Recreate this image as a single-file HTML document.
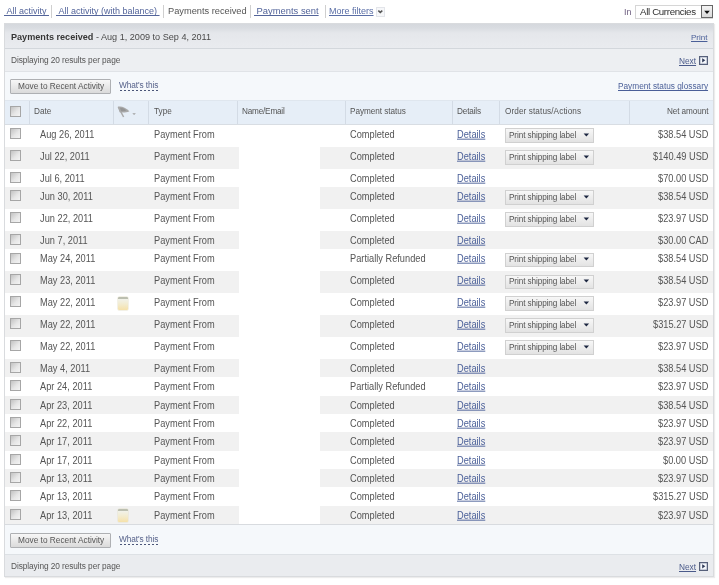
<!DOCTYPE html>
<html><head><meta charset="utf-8"><style>
html,body{margin:0;padding:0;background:#fff;width:719px;height:585px;overflow:hidden;position:relative}
body{font-family:"Liberation Sans",sans-serif}
.t{position:absolute;white-space:nowrap;will-change:transform;text-decoration-skip-ink:none}
.r{position:absolute}
b{font-weight:bold}
</style></head><body>
<div class="t " style="left:4.40px;top:7.18px;font-size:9px;line-height:9px;color:#53649a;font-weight:normal;text-decoration:underline;">&nbsp;All activity&nbsp;</div>
<div class="r" style="left:51.00px;top:4.50px;width:1.00px;height:13.00px;background:#cfcfcf"></div>
<div class="t " style="left:56.30px;top:7.18px;font-size:9px;line-height:9px;color:#53649a;font-weight:normal;text-decoration:underline;">&nbsp;All activity (with balance)&nbsp;</div>
<div class="r" style="left:163.00px;top:4.50px;width:1.00px;height:13.00px;background:#cfcfcf"></div>
<div class="t " style="left:167.70px;top:6.97px;font-size:9.25px;line-height:9.25px;color:#555555;font-weight:normal;">Payments received</div>
<div class="r" style="left:250.00px;top:4.50px;width:1.00px;height:13.00px;background:#cfcfcf"></div>
<div class="t " style="left:253.80px;top:6.34px;font-size:9.4px;line-height:9.4px;color:#53649a;font-weight:normal;text-decoration:underline;">&nbsp;Payments sent</div>
<div class="r" style="left:324.50px;top:4.50px;width:1.00px;height:13.00px;background:#cfcfcf"></div>
<div class="t " style="left:328.80px;top:7.18px;font-size:9px;line-height:9px;color:#5a6ea6;font-weight:normal;text-decoration:underline;">More filters</div>
<div class="r" style="left:376px;top:7px;width:7px;height:7.5px;background:#f6f7f9;border:1px solid #e3e5ea"></div>
<svg class="r" style="left:375.5px;top:7.5px" width="8" height="8" viewBox="0 0 8 8"><path d="M2.3 2.6 L4.3 4.4 L6.3 2.6" stroke="#555" stroke-width="1.5" fill="none"/></svg>
<div class="t " style="left:624.00px;top:7.78px;font-size:9px;line-height:9px;color:#6e5f80;font-weight:normal;">In</div>
<div class="r" style="left:635px;top:4.5px;width:76px;height:12.5px;border:1px solid #d6d6d6;background:#fff"></div>
<div class="t " style="left:639.70px;top:6.69px;font-size:9.7px;line-height:9.7px;color:#2e2e2e;font-weight:normal;letter-spacing:-0.33px;">All Currencies</div>
<div class="r" style="left:700.5px;top:4.5px;width:10px;height:11.5px;border:1px solid #666;background:linear-gradient(#f4f4f4,#dadada)"></div>
<svg class="r" style="left:701.5px;top:5.5px" width="10" height="11" viewBox="0 0 10 11"><path d="M2.2 4.8 L7.8 4.8 L5 8 Z" fill="#111"/></svg>
<div class="r" style="left:4px;top:23px;width:708px;height:552px;border:1px solid #d9dbde;background:#fff;box-shadow:1px 1px 1px #ececec"></div>
<div class="r" style="left:5.00px;top:24.00px;width:708.00px;height:24.00px;background:linear-gradient(#d5d8dd 0px,#d9dce1 4px,#e5e7eb 9px,#e9ebef 24px)"></div>
<div class="r" style="left:5.00px;top:48.00px;width:708.00px;height:1.00px;background:#d3d7dc"></div>
<div class="t " style="left:10.80px;top:33.10px;font-size:9.1px;line-height:9.1px;color:#4a4a4a;font-weight:normal;"><b style="color:#363636">Payments received</b> - Aug 1, 2009 to Sep 4, 2011</div>
<div class="t " style="right:11.50px;top:33.73px;font-size:8px;line-height:8px;color:#4a5f98;font-weight:normal;text-decoration:underline;">Print</div>
<div class="r" style="left:5.00px;top:49.00px;width:708.00px;height:22.00px;background:#edeff2"></div>
<div class="r" style="left:5.00px;top:71.00px;width:708.00px;height:1.00px;background:#e0e3e7"></div>
<div class="t " style="left:10.80px;top:56.17px;font-size:8.3px;line-height:8.3px;color:#555555;font-weight:normal;letter-spacing:-0.08px;">Displaying 20 results per page</div>
<div class="t " style="right:23.30px;top:56.57px;font-size:8.3px;line-height:8.3px;color:#4a5a8a;font-weight:normal;text-decoration:underline;">Next</div><div class="r" style="left:699.3px;top:56.2px;width:7px;height:6.5px;border:1px solid #56607a;background:#f4f7fb;box-shadow:inset 0 0 0 0.5px #9aa2b6"></div><svg class="r" style="left:699.3px;top:56.2px" width="9" height="9" viewBox="0 0 9 9"><path d="M3.2 2.2 L6.3 4.3 L3.2 6.4 Z" fill="#2f3a58"/></svg>
<div class="r" style="left:5.00px;top:72.00px;width:708.00px;height:28.00px;background:#f5f8fb"></div>
<div class="r" style="left:10px;top:79.2px;width:99px;height:12.5px;border:1px solid #aeb0b3;background:linear-gradient(#f7f7f7,#e6e6e6 60%,#dadada);border-radius:1px"></div><div class="t " style="left:18.10px;top:82.17px;font-size:8.3px;line-height:8.3px;color:#555555;font-weight:normal;">Move to Recent Activity</div><div class="t " style="left:118.90px;top:80.77px;font-size:8.3px;line-height:8.3px;color:#56628a;font-weight:normal;letter-spacing:-0.1px;">What's this</div><div class="r" style="left:119.50px;top:89.80px;width:39.00px;height:1.00px;background:repeating-linear-gradient(90deg,#4a5578 0 2px,transparent 2px 4px)"></div>
<div class="t " style="right:11.00px;top:83.40px;font-size:8.27px;line-height:8.27px;color:#4a5f98;font-weight:normal;text-decoration:underline;">Payment status glossary</div>
<div class="r" style="left:5.00px;top:99.50px;width:708.00px;height:1.00px;background:#dfe6ee"></div>
<div class="r" style="left:5.00px;top:100.50px;width:708.00px;height:23.50px;background:#e6eef7"></div>
<div class="r" style="left:5.00px;top:124.00px;width:708.00px;height:1.00px;background:#d8dde3"></div>
<div class="r" style="left:29.00px;top:100.50px;width:1.00px;height:23.50px;background:#d3dbe5"></div>
<div class="r" style="left:113.00px;top:100.50px;width:1.00px;height:23.50px;background:#d3dbe5"></div>
<div class="r" style="left:148.00px;top:100.50px;width:1.00px;height:23.50px;background:#d3dbe5"></div>
<div class="r" style="left:237.00px;top:100.50px;width:1.00px;height:23.50px;background:#d3dbe5"></div>
<div class="r" style="left:345.00px;top:100.50px;width:1.00px;height:23.50px;background:#d3dbe5"></div>
<div class="r" style="left:452.00px;top:100.50px;width:1.00px;height:23.50px;background:#d3dbe5"></div>
<div class="r" style="left:499.00px;top:100.50px;width:1.00px;height:23.50px;background:#d3dbe5"></div>
<div class="r" style="left:629.00px;top:100.50px;width:1.00px;height:23.50px;background:#d3dbe5"></div>
<div class="r" style="left:10.00px;top:105.50px;width:11.00px;height:11.00px;border:1px solid #a6a6a6;background:linear-gradient(135deg,#c2c2c2,#e6e6e6 55%,#f4f4f4);box-sizing:border-box"></div>
<div class="t " style="left:34.00px;top:107.66px;font-size:8.2px;line-height:8.2px;color:#555555;font-weight:normal;">Date</div>
<svg class="r" style="left:116px;top:105px" width="22" height="14" viewBox="0 0 22 14"><path d="M2.3 2 L7.6 12" stroke="#aaaaaa" stroke-width="1.5"/><path d="M1.8 1.8 C5 0.8 9.5 2.2 13.4 6.2 C10 7.8 6.5 7.9 3.6 7.2 Z" fill="#a9a9a9"/><path d="M4 2.8 C6.5 2.6 9 4 10.5 5.6 C8.5 6.4 6 6.4 5 6 Z" fill="#959595"/><path d="M16.3 8.3 L19.9 8.3 L18.1 10 Z" fill="#a0a0a0"/></svg>
<div class="t " style="left:153.75px;top:107.66px;font-size:8.2px;line-height:8.2px;color:#555555;font-weight:normal;">Type</div>
<div class="t " style="left:241.90px;top:107.66px;font-size:8.2px;line-height:8.2px;color:#555555;font-weight:normal;letter-spacing:-0.2px;">Name/Email</div>
<div class="t " style="left:350.00px;top:107.66px;font-size:8.2px;line-height:8.2px;color:#555555;font-weight:normal;letter-spacing:-0.05px;">Payment status</div>
<div class="t " style="left:457.00px;top:107.66px;font-size:8.2px;line-height:8.2px;color:#555555;font-weight:normal;letter-spacing:-0.15px;">Details</div>
<div class="t " style="left:504.70px;top:107.66px;font-size:8.2px;line-height:8.2px;color:#555555;font-weight:normal;letter-spacing:0.1px;">Order status/Actions</div>
<div class="t " style="right:10.60px;top:107.66px;font-size:8.2px;line-height:8.2px;color:#555555;font-weight:normal;letter-spacing:-0.1px;">Net amount</div>
<div class="r" style="left:5.00px;top:125.00px;width:708.00px;height:21.90px;background:#ffffff"></div>
<div class="r" style="left:239.00px;top:125.00px;width:81.30px;height:21.90px;background:#fff"></div>
<div class="r" style="left:10.00px;top:128.20px;width:11.00px;height:11.00px;border:1px solid #a6a6a6;background:linear-gradient(135deg,#c2c2c2,#e6e6e6 55%,#f4f4f4);box-sizing:border-box"></div>
<div class="t " style="left:40.00px;top:130.17px;font-size:9.25px;line-height:9.25px;color:#555555;font-weight:normal;transform:scaleY(1.1);transform-origin:0 1.09px;">Aug 26, 2011</div>
<div class="t " style="left:154.00px;top:130.17px;font-size:9.25px;line-height:9.25px;color:#555555;font-weight:normal;transform:scaleY(1.1);transform-origin:0 1.09px;">Payment From</div>
<div class="t " style="left:350.00px;top:130.17px;font-size:9.25px;line-height:9.25px;color:#555555;font-weight:normal;transform:scaleY(1.1);transform-origin:0 1.09px;">Completed</div>
<div class="t " style="left:457.40px;top:130.17px;font-size:9.25px;line-height:9.25px;color:#4a5f98;font-weight:normal;text-decoration:underline;transform:scaleY(1.1);transform-origin:0 1.09px;">Details</div>
<div class="r" style="left:504.5px;top:128.30px;width:89px;height:14.8px;box-sizing:border-box;border:1px solid #d0d0d0;background:linear-gradient(#f7f7f7,#e3e3e3)"></div>
<div class="t " style="left:509.30px;top:132.06px;font-size:8.2px;line-height:8.2px;color:#555555;font-weight:normal;letter-spacing:-0.1px;">Print shipping label</div>
<svg class="r" style="left:582px;top:128.60px" width="8" height="14" viewBox="0 0 8 14"><path d="M1.6 4.6 L7.1 4.6 L4.35 7.4 Z" fill="#1c2640"/></svg>
<div class="t " style="right:10.60px;top:130.17px;font-size:9.25px;line-height:9.25px;color:#555555;font-weight:normal;transform:scaleY(1.1);transform-origin:0 1.09px;">$38.54 USD</div>
<div class="r" style="left:5.00px;top:146.90px;width:708.00px;height:21.90px;background:#f1f1f1"></div>
<div class="r" style="left:239.00px;top:146.90px;width:81.30px;height:21.90px;background:#fff"></div>
<div class="r" style="left:10.00px;top:150.10px;width:11.00px;height:11.00px;border:1px solid #a6a6a6;background:linear-gradient(135deg,#c2c2c2,#e6e6e6 55%,#f4f4f4);box-sizing:border-box"></div>
<div class="t " style="left:40.00px;top:152.07px;font-size:9.25px;line-height:9.25px;color:#555555;font-weight:normal;transform:scaleY(1.1);transform-origin:0 1.09px;">Jul 22, 2011</div>
<div class="t " style="left:154.00px;top:152.07px;font-size:9.25px;line-height:9.25px;color:#555555;font-weight:normal;transform:scaleY(1.1);transform-origin:0 1.09px;">Payment From</div>
<div class="t " style="left:350.00px;top:152.07px;font-size:9.25px;line-height:9.25px;color:#555555;font-weight:normal;transform:scaleY(1.1);transform-origin:0 1.09px;">Completed</div>
<div class="t " style="left:457.40px;top:152.07px;font-size:9.25px;line-height:9.25px;color:#4a5f98;font-weight:normal;text-decoration:underline;transform:scaleY(1.1);transform-origin:0 1.09px;">Details</div>
<div class="r" style="left:504.5px;top:150.20px;width:89px;height:14.8px;box-sizing:border-box;border:1px solid #d0d0d0;background:linear-gradient(#f7f7f7,#e3e3e3)"></div>
<div class="t " style="left:509.30px;top:153.96px;font-size:8.2px;line-height:8.2px;color:#555555;font-weight:normal;letter-spacing:-0.1px;">Print shipping label</div>
<svg class="r" style="left:582px;top:150.50px" width="8" height="14" viewBox="0 0 8 14"><path d="M1.6 4.6 L7.1 4.6 L4.35 7.4 Z" fill="#1c2640"/></svg>
<div class="t " style="right:10.60px;top:152.07px;font-size:9.25px;line-height:9.25px;color:#555555;font-weight:normal;transform:scaleY(1.1);transform-origin:0 1.09px;">$140.49 USD</div>
<div class="r" style="left:5.00px;top:168.80px;width:708.00px;height:18.35px;background:#ffffff"></div>
<div class="r" style="left:239.00px;top:168.80px;width:81.30px;height:18.35px;background:#fff"></div>
<div class="r" style="left:10.00px;top:172.00px;width:11.00px;height:11.00px;border:1px solid #a6a6a6;background:linear-gradient(135deg,#c2c2c2,#e6e6e6 55%,#f4f4f4);box-sizing:border-box"></div>
<div class="t " style="left:40.00px;top:173.97px;font-size:9.25px;line-height:9.25px;color:#555555;font-weight:normal;transform:scaleY(1.1);transform-origin:0 1.09px;">Jul 6, 2011</div>
<div class="t " style="left:154.00px;top:173.97px;font-size:9.25px;line-height:9.25px;color:#555555;font-weight:normal;transform:scaleY(1.1);transform-origin:0 1.09px;">Payment From</div>
<div class="t " style="left:350.00px;top:173.97px;font-size:9.25px;line-height:9.25px;color:#555555;font-weight:normal;transform:scaleY(1.1);transform-origin:0 1.09px;">Completed</div>
<div class="t " style="left:457.40px;top:173.97px;font-size:9.25px;line-height:9.25px;color:#4a5f98;font-weight:normal;text-decoration:underline;transform:scaleY(1.1);transform-origin:0 1.09px;">Details</div>
<div class="t " style="right:10.60px;top:173.97px;font-size:9.25px;line-height:9.25px;color:#555555;font-weight:normal;transform:scaleY(1.1);transform-origin:0 1.09px;">$70.00 USD</div>
<div class="r" style="left:5.00px;top:187.15px;width:708.00px;height:21.90px;background:#f1f1f1"></div>
<div class="r" style="left:239.00px;top:187.15px;width:81.30px;height:21.90px;background:#fff"></div>
<div class="r" style="left:10.00px;top:190.35px;width:11.00px;height:11.00px;border:1px solid #a6a6a6;background:linear-gradient(135deg,#c2c2c2,#e6e6e6 55%,#f4f4f4);box-sizing:border-box"></div>
<div class="t " style="left:40.00px;top:192.32px;font-size:9.25px;line-height:9.25px;color:#555555;font-weight:normal;transform:scaleY(1.1);transform-origin:0 1.09px;">Jun 30, 2011</div>
<div class="t " style="left:154.00px;top:192.32px;font-size:9.25px;line-height:9.25px;color:#555555;font-weight:normal;transform:scaleY(1.1);transform-origin:0 1.09px;">Payment From</div>
<div class="t " style="left:350.00px;top:192.32px;font-size:9.25px;line-height:9.25px;color:#555555;font-weight:normal;transform:scaleY(1.1);transform-origin:0 1.09px;">Completed</div>
<div class="t " style="left:457.40px;top:192.32px;font-size:9.25px;line-height:9.25px;color:#4a5f98;font-weight:normal;text-decoration:underline;transform:scaleY(1.1);transform-origin:0 1.09px;">Details</div>
<div class="r" style="left:504.5px;top:190.45px;width:89px;height:14.8px;box-sizing:border-box;border:1px solid #d0d0d0;background:linear-gradient(#f7f7f7,#e3e3e3)"></div>
<div class="t " style="left:509.30px;top:194.21px;font-size:8.2px;line-height:8.2px;color:#555555;font-weight:normal;letter-spacing:-0.1px;">Print shipping label</div>
<svg class="r" style="left:582px;top:190.75px" width="8" height="14" viewBox="0 0 8 14"><path d="M1.6 4.6 L7.1 4.6 L4.35 7.4 Z" fill="#1c2640"/></svg>
<div class="t " style="right:10.60px;top:192.32px;font-size:9.25px;line-height:9.25px;color:#555555;font-weight:normal;transform:scaleY(1.1);transform-origin:0 1.09px;">$38.54 USD</div>
<div class="r" style="left:5.00px;top:209.05px;width:708.00px;height:21.90px;background:#ffffff"></div>
<div class="r" style="left:239.00px;top:209.05px;width:81.30px;height:21.90px;background:#fff"></div>
<div class="r" style="left:10.00px;top:212.25px;width:11.00px;height:11.00px;border:1px solid #a6a6a6;background:linear-gradient(135deg,#c2c2c2,#e6e6e6 55%,#f4f4f4);box-sizing:border-box"></div>
<div class="t " style="left:40.00px;top:214.22px;font-size:9.25px;line-height:9.25px;color:#555555;font-weight:normal;transform:scaleY(1.1);transform-origin:0 1.09px;">Jun 22, 2011</div>
<div class="t " style="left:154.00px;top:214.22px;font-size:9.25px;line-height:9.25px;color:#555555;font-weight:normal;transform:scaleY(1.1);transform-origin:0 1.09px;">Payment From</div>
<div class="t " style="left:350.00px;top:214.22px;font-size:9.25px;line-height:9.25px;color:#555555;font-weight:normal;transform:scaleY(1.1);transform-origin:0 1.09px;">Completed</div>
<div class="t " style="left:457.40px;top:214.22px;font-size:9.25px;line-height:9.25px;color:#4a5f98;font-weight:normal;text-decoration:underline;transform:scaleY(1.1);transform-origin:0 1.09px;">Details</div>
<div class="r" style="left:504.5px;top:212.35px;width:89px;height:14.8px;box-sizing:border-box;border:1px solid #d0d0d0;background:linear-gradient(#f7f7f7,#e3e3e3)"></div>
<div class="t " style="left:509.30px;top:216.11px;font-size:8.2px;line-height:8.2px;color:#555555;font-weight:normal;letter-spacing:-0.1px;">Print shipping label</div>
<svg class="r" style="left:582px;top:212.65px" width="8" height="14" viewBox="0 0 8 14"><path d="M1.6 4.6 L7.1 4.6 L4.35 7.4 Z" fill="#1c2640"/></svg>
<div class="t " style="right:10.60px;top:214.22px;font-size:9.25px;line-height:9.25px;color:#555555;font-weight:normal;transform:scaleY(1.1);transform-origin:0 1.09px;">$23.97 USD</div>
<div class="r" style="left:5.00px;top:230.95px;width:708.00px;height:18.35px;background:#f1f1f1"></div>
<div class="r" style="left:239.00px;top:230.95px;width:81.30px;height:18.35px;background:#fff"></div>
<div class="r" style="left:10.00px;top:234.15px;width:11.00px;height:11.00px;border:1px solid #a6a6a6;background:linear-gradient(135deg,#c2c2c2,#e6e6e6 55%,#f4f4f4);box-sizing:border-box"></div>
<div class="t " style="left:40.00px;top:236.12px;font-size:9.25px;line-height:9.25px;color:#555555;font-weight:normal;transform:scaleY(1.1);transform-origin:0 1.09px;">Jun 7, 2011</div>
<div class="t " style="left:154.00px;top:236.12px;font-size:9.25px;line-height:9.25px;color:#555555;font-weight:normal;transform:scaleY(1.1);transform-origin:0 1.09px;">Payment From</div>
<div class="t " style="left:350.00px;top:236.12px;font-size:9.25px;line-height:9.25px;color:#555555;font-weight:normal;transform:scaleY(1.1);transform-origin:0 1.09px;">Completed</div>
<div class="t " style="left:457.40px;top:236.12px;font-size:9.25px;line-height:9.25px;color:#4a5f98;font-weight:normal;text-decoration:underline;transform:scaleY(1.1);transform-origin:0 1.09px;">Details</div>
<div class="t " style="right:10.60px;top:236.12px;font-size:9.25px;line-height:9.25px;color:#555555;font-weight:normal;transform:scaleY(1.1);transform-origin:0 1.09px;">$30.00 CAD</div>
<div class="r" style="left:5.00px;top:249.30px;width:708.00px;height:21.90px;background:#ffffff"></div>
<div class="r" style="left:239.00px;top:249.30px;width:81.30px;height:21.90px;background:#fff"></div>
<div class="r" style="left:10.00px;top:252.50px;width:11.00px;height:11.00px;border:1px solid #a6a6a6;background:linear-gradient(135deg,#c2c2c2,#e6e6e6 55%,#f4f4f4);box-sizing:border-box"></div>
<div class="t " style="left:40.00px;top:254.47px;font-size:9.25px;line-height:9.25px;color:#555555;font-weight:normal;transform:scaleY(1.1);transform-origin:0 1.09px;">May 24, 2011</div>
<div class="t " style="left:154.00px;top:254.47px;font-size:9.25px;line-height:9.25px;color:#555555;font-weight:normal;transform:scaleY(1.1);transform-origin:0 1.09px;">Payment From</div>
<div class="t " style="left:350.00px;top:254.47px;font-size:9.25px;line-height:9.25px;color:#555555;font-weight:normal;transform:scaleY(1.1);transform-origin:0 1.09px;">Partially Refunded</div>
<div class="t " style="left:457.40px;top:254.47px;font-size:9.25px;line-height:9.25px;color:#4a5f98;font-weight:normal;text-decoration:underline;transform:scaleY(1.1);transform-origin:0 1.09px;">Details</div>
<div class="r" style="left:504.5px;top:252.60px;width:89px;height:14.8px;box-sizing:border-box;border:1px solid #d0d0d0;background:linear-gradient(#f7f7f7,#e3e3e3)"></div>
<div class="t " style="left:509.30px;top:256.36px;font-size:8.2px;line-height:8.2px;color:#555555;font-weight:normal;letter-spacing:-0.1px;">Print shipping label</div>
<svg class="r" style="left:582px;top:252.90px" width="8" height="14" viewBox="0 0 8 14"><path d="M1.6 4.6 L7.1 4.6 L4.35 7.4 Z" fill="#1c2640"/></svg>
<div class="t " style="right:10.60px;top:254.47px;font-size:9.25px;line-height:9.25px;color:#555555;font-weight:normal;transform:scaleY(1.1);transform-origin:0 1.09px;">$38.54 USD</div>
<div class="r" style="left:5.00px;top:271.20px;width:708.00px;height:21.90px;background:#f1f1f1"></div>
<div class="r" style="left:239.00px;top:271.20px;width:81.30px;height:21.90px;background:#fff"></div>
<div class="r" style="left:10.00px;top:274.40px;width:11.00px;height:11.00px;border:1px solid #a6a6a6;background:linear-gradient(135deg,#c2c2c2,#e6e6e6 55%,#f4f4f4);box-sizing:border-box"></div>
<div class="t " style="left:40.00px;top:276.37px;font-size:9.25px;line-height:9.25px;color:#555555;font-weight:normal;transform:scaleY(1.1);transform-origin:0 1.09px;">May 23, 2011</div>
<div class="t " style="left:154.00px;top:276.37px;font-size:9.25px;line-height:9.25px;color:#555555;font-weight:normal;transform:scaleY(1.1);transform-origin:0 1.09px;">Payment From</div>
<div class="t " style="left:350.00px;top:276.37px;font-size:9.25px;line-height:9.25px;color:#555555;font-weight:normal;transform:scaleY(1.1);transform-origin:0 1.09px;">Completed</div>
<div class="t " style="left:457.40px;top:276.37px;font-size:9.25px;line-height:9.25px;color:#4a5f98;font-weight:normal;text-decoration:underline;transform:scaleY(1.1);transform-origin:0 1.09px;">Details</div>
<div class="r" style="left:504.5px;top:274.50px;width:89px;height:14.8px;box-sizing:border-box;border:1px solid #d0d0d0;background:linear-gradient(#f7f7f7,#e3e3e3)"></div>
<div class="t " style="left:509.30px;top:278.26px;font-size:8.2px;line-height:8.2px;color:#555555;font-weight:normal;letter-spacing:-0.1px;">Print shipping label</div>
<svg class="r" style="left:582px;top:274.80px" width="8" height="14" viewBox="0 0 8 14"><path d="M1.6 4.6 L7.1 4.6 L4.35 7.4 Z" fill="#1c2640"/></svg>
<div class="t " style="right:10.60px;top:276.37px;font-size:9.25px;line-height:9.25px;color:#555555;font-weight:normal;transform:scaleY(1.1);transform-origin:0 1.09px;">$38.54 USD</div>
<div class="r" style="left:5.00px;top:293.10px;width:708.00px;height:21.90px;background:#ffffff"></div>
<div class="r" style="left:239.00px;top:293.10px;width:81.30px;height:21.90px;background:#fff"></div>
<div class="r" style="left:10.00px;top:296.30px;width:11.00px;height:11.00px;border:1px solid #a6a6a6;background:linear-gradient(135deg,#c2c2c2,#e6e6e6 55%,#f4f4f4);box-sizing:border-box"></div>
<div class="t " style="left:40.00px;top:298.27px;font-size:9.25px;line-height:9.25px;color:#555555;font-weight:normal;transform:scaleY(1.1);transform-origin:0 1.09px;">May 22, 2011</div>
<div class="r" style="left:118.4px;top:296.50px;width:9.7px;height:13px;background:linear-gradient(#bcbfb0 0,#bcbfb0 2px,#f1f2ea 2px,#f3ecd0 7px,#f5e2ad 12.5px);border-radius:1px;box-shadow:0 0 0 0.5px #e8e4d0"></div>
<div class="t " style="left:154.00px;top:298.27px;font-size:9.25px;line-height:9.25px;color:#555555;font-weight:normal;transform:scaleY(1.1);transform-origin:0 1.09px;">Payment From</div>
<div class="t " style="left:350.00px;top:298.27px;font-size:9.25px;line-height:9.25px;color:#555555;font-weight:normal;transform:scaleY(1.1);transform-origin:0 1.09px;">Completed</div>
<div class="t " style="left:457.40px;top:298.27px;font-size:9.25px;line-height:9.25px;color:#4a5f98;font-weight:normal;text-decoration:underline;transform:scaleY(1.1);transform-origin:0 1.09px;">Details</div>
<div class="r" style="left:504.5px;top:296.40px;width:89px;height:14.8px;box-sizing:border-box;border:1px solid #d0d0d0;background:linear-gradient(#f7f7f7,#e3e3e3)"></div>
<div class="t " style="left:509.30px;top:300.16px;font-size:8.2px;line-height:8.2px;color:#555555;font-weight:normal;letter-spacing:-0.1px;">Print shipping label</div>
<svg class="r" style="left:582px;top:296.70px" width="8" height="14" viewBox="0 0 8 14"><path d="M1.6 4.6 L7.1 4.6 L4.35 7.4 Z" fill="#1c2640"/></svg>
<div class="t " style="right:10.60px;top:298.27px;font-size:9.25px;line-height:9.25px;color:#555555;font-weight:normal;transform:scaleY(1.1);transform-origin:0 1.09px;">$23.97 USD</div>
<div class="r" style="left:5.00px;top:315.00px;width:708.00px;height:21.90px;background:#f1f1f1"></div>
<div class="r" style="left:239.00px;top:315.00px;width:81.30px;height:21.90px;background:#fff"></div>
<div class="r" style="left:10.00px;top:318.20px;width:11.00px;height:11.00px;border:1px solid #a6a6a6;background:linear-gradient(135deg,#c2c2c2,#e6e6e6 55%,#f4f4f4);box-sizing:border-box"></div>
<div class="t " style="left:40.00px;top:320.17px;font-size:9.25px;line-height:9.25px;color:#555555;font-weight:normal;transform:scaleY(1.1);transform-origin:0 1.09px;">May 22, 2011</div>
<div class="t " style="left:154.00px;top:320.17px;font-size:9.25px;line-height:9.25px;color:#555555;font-weight:normal;transform:scaleY(1.1);transform-origin:0 1.09px;">Payment From</div>
<div class="t " style="left:350.00px;top:320.17px;font-size:9.25px;line-height:9.25px;color:#555555;font-weight:normal;transform:scaleY(1.1);transform-origin:0 1.09px;">Completed</div>
<div class="t " style="left:457.40px;top:320.17px;font-size:9.25px;line-height:9.25px;color:#4a5f98;font-weight:normal;text-decoration:underline;transform:scaleY(1.1);transform-origin:0 1.09px;">Details</div>
<div class="r" style="left:504.5px;top:318.30px;width:89px;height:14.8px;box-sizing:border-box;border:1px solid #d0d0d0;background:linear-gradient(#f7f7f7,#e3e3e3)"></div>
<div class="t " style="left:509.30px;top:322.06px;font-size:8.2px;line-height:8.2px;color:#555555;font-weight:normal;letter-spacing:-0.1px;">Print shipping label</div>
<svg class="r" style="left:582px;top:318.60px" width="8" height="14" viewBox="0 0 8 14"><path d="M1.6 4.6 L7.1 4.6 L4.35 7.4 Z" fill="#1c2640"/></svg>
<div class="t " style="right:10.60px;top:320.17px;font-size:9.25px;line-height:9.25px;color:#555555;font-weight:normal;transform:scaleY(1.1);transform-origin:0 1.09px;">$315.27 USD</div>
<div class="r" style="left:5.00px;top:336.90px;width:708.00px;height:21.90px;background:#ffffff"></div>
<div class="r" style="left:239.00px;top:336.90px;width:81.30px;height:21.90px;background:#fff"></div>
<div class="r" style="left:10.00px;top:340.10px;width:11.00px;height:11.00px;border:1px solid #a6a6a6;background:linear-gradient(135deg,#c2c2c2,#e6e6e6 55%,#f4f4f4);box-sizing:border-box"></div>
<div class="t " style="left:40.00px;top:342.07px;font-size:9.25px;line-height:9.25px;color:#555555;font-weight:normal;transform:scaleY(1.1);transform-origin:0 1.09px;">May 22, 2011</div>
<div class="t " style="left:154.00px;top:342.07px;font-size:9.25px;line-height:9.25px;color:#555555;font-weight:normal;transform:scaleY(1.1);transform-origin:0 1.09px;">Payment From</div>
<div class="t " style="left:350.00px;top:342.07px;font-size:9.25px;line-height:9.25px;color:#555555;font-weight:normal;transform:scaleY(1.1);transform-origin:0 1.09px;">Completed</div>
<div class="t " style="left:457.40px;top:342.07px;font-size:9.25px;line-height:9.25px;color:#4a5f98;font-weight:normal;text-decoration:underline;transform:scaleY(1.1);transform-origin:0 1.09px;">Details</div>
<div class="r" style="left:504.5px;top:340.20px;width:89px;height:14.8px;box-sizing:border-box;border:1px solid #d0d0d0;background:linear-gradient(#f7f7f7,#e3e3e3)"></div>
<div class="t " style="left:509.30px;top:343.96px;font-size:8.2px;line-height:8.2px;color:#555555;font-weight:normal;letter-spacing:-0.1px;">Print shipping label</div>
<svg class="r" style="left:582px;top:340.50px" width="8" height="14" viewBox="0 0 8 14"><path d="M1.6 4.6 L7.1 4.6 L4.35 7.4 Z" fill="#1c2640"/></svg>
<div class="t " style="right:10.60px;top:342.07px;font-size:9.25px;line-height:9.25px;color:#555555;font-weight:normal;transform:scaleY(1.1);transform-origin:0 1.09px;">$23.97 USD</div>
<div class="r" style="left:5.00px;top:358.80px;width:708.00px;height:18.35px;background:#f1f1f1"></div>
<div class="r" style="left:239.00px;top:358.80px;width:81.30px;height:18.35px;background:#fff"></div>
<div class="r" style="left:10.00px;top:362.00px;width:11.00px;height:11.00px;border:1px solid #a6a6a6;background:linear-gradient(135deg,#c2c2c2,#e6e6e6 55%,#f4f4f4);box-sizing:border-box"></div>
<div class="t " style="left:40.00px;top:363.97px;font-size:9.25px;line-height:9.25px;color:#555555;font-weight:normal;transform:scaleY(1.1);transform-origin:0 1.09px;">May 4, 2011</div>
<div class="t " style="left:154.00px;top:363.97px;font-size:9.25px;line-height:9.25px;color:#555555;font-weight:normal;transform:scaleY(1.1);transform-origin:0 1.09px;">Payment From</div>
<div class="t " style="left:350.00px;top:363.97px;font-size:9.25px;line-height:9.25px;color:#555555;font-weight:normal;transform:scaleY(1.1);transform-origin:0 1.09px;">Completed</div>
<div class="t " style="left:457.40px;top:363.97px;font-size:9.25px;line-height:9.25px;color:#4a5f98;font-weight:normal;text-decoration:underline;transform:scaleY(1.1);transform-origin:0 1.09px;">Details</div>
<div class="t " style="right:10.60px;top:363.97px;font-size:9.25px;line-height:9.25px;color:#555555;font-weight:normal;transform:scaleY(1.1);transform-origin:0 1.09px;">$38.54 USD</div>
<div class="r" style="left:5.00px;top:377.15px;width:708.00px;height:18.35px;background:#ffffff"></div>
<div class="r" style="left:239.00px;top:377.15px;width:81.30px;height:18.35px;background:#fff"></div>
<div class="r" style="left:10.00px;top:380.35px;width:11.00px;height:11.00px;border:1px solid #a6a6a6;background:linear-gradient(135deg,#c2c2c2,#e6e6e6 55%,#f4f4f4);box-sizing:border-box"></div>
<div class="t " style="left:40.00px;top:382.32px;font-size:9.25px;line-height:9.25px;color:#555555;font-weight:normal;transform:scaleY(1.1);transform-origin:0 1.09px;">Apr 24, 2011</div>
<div class="t " style="left:154.00px;top:382.32px;font-size:9.25px;line-height:9.25px;color:#555555;font-weight:normal;transform:scaleY(1.1);transform-origin:0 1.09px;">Payment From</div>
<div class="t " style="left:350.00px;top:382.32px;font-size:9.25px;line-height:9.25px;color:#555555;font-weight:normal;transform:scaleY(1.1);transform-origin:0 1.09px;">Partially Refunded</div>
<div class="t " style="left:457.40px;top:382.32px;font-size:9.25px;line-height:9.25px;color:#4a5f98;font-weight:normal;text-decoration:underline;transform:scaleY(1.1);transform-origin:0 1.09px;">Details</div>
<div class="t " style="right:10.60px;top:382.32px;font-size:9.25px;line-height:9.25px;color:#555555;font-weight:normal;transform:scaleY(1.1);transform-origin:0 1.09px;">$23.97 USD</div>
<div class="r" style="left:5.00px;top:395.50px;width:708.00px;height:18.35px;background:#f1f1f1"></div>
<div class="r" style="left:239.00px;top:395.50px;width:81.30px;height:18.35px;background:#fff"></div>
<div class="r" style="left:10.00px;top:398.70px;width:11.00px;height:11.00px;border:1px solid #a6a6a6;background:linear-gradient(135deg,#c2c2c2,#e6e6e6 55%,#f4f4f4);box-sizing:border-box"></div>
<div class="t " style="left:40.00px;top:400.67px;font-size:9.25px;line-height:9.25px;color:#555555;font-weight:normal;transform:scaleY(1.1);transform-origin:0 1.09px;">Apr 23, 2011</div>
<div class="t " style="left:154.00px;top:400.67px;font-size:9.25px;line-height:9.25px;color:#555555;font-weight:normal;transform:scaleY(1.1);transform-origin:0 1.09px;">Payment From</div>
<div class="t " style="left:350.00px;top:400.67px;font-size:9.25px;line-height:9.25px;color:#555555;font-weight:normal;transform:scaleY(1.1);transform-origin:0 1.09px;">Completed</div>
<div class="t " style="left:457.40px;top:400.67px;font-size:9.25px;line-height:9.25px;color:#4a5f98;font-weight:normal;text-decoration:underline;transform:scaleY(1.1);transform-origin:0 1.09px;">Details</div>
<div class="t " style="right:10.60px;top:400.67px;font-size:9.25px;line-height:9.25px;color:#555555;font-weight:normal;transform:scaleY(1.1);transform-origin:0 1.09px;">$38.54 USD</div>
<div class="r" style="left:5.00px;top:413.85px;width:708.00px;height:18.35px;background:#ffffff"></div>
<div class="r" style="left:239.00px;top:413.85px;width:81.30px;height:18.35px;background:#fff"></div>
<div class="r" style="left:10.00px;top:417.05px;width:11.00px;height:11.00px;border:1px solid #a6a6a6;background:linear-gradient(135deg,#c2c2c2,#e6e6e6 55%,#f4f4f4);box-sizing:border-box"></div>
<div class="t " style="left:40.00px;top:419.02px;font-size:9.25px;line-height:9.25px;color:#555555;font-weight:normal;transform:scaleY(1.1);transform-origin:0 1.09px;">Apr 22, 2011</div>
<div class="t " style="left:154.00px;top:419.02px;font-size:9.25px;line-height:9.25px;color:#555555;font-weight:normal;transform:scaleY(1.1);transform-origin:0 1.09px;">Payment From</div>
<div class="t " style="left:350.00px;top:419.02px;font-size:9.25px;line-height:9.25px;color:#555555;font-weight:normal;transform:scaleY(1.1);transform-origin:0 1.09px;">Completed</div>
<div class="t " style="left:457.40px;top:419.02px;font-size:9.25px;line-height:9.25px;color:#4a5f98;font-weight:normal;text-decoration:underline;transform:scaleY(1.1);transform-origin:0 1.09px;">Details</div>
<div class="t " style="right:10.60px;top:419.02px;font-size:9.25px;line-height:9.25px;color:#555555;font-weight:normal;transform:scaleY(1.1);transform-origin:0 1.09px;">$23.97 USD</div>
<div class="r" style="left:5.00px;top:432.20px;width:708.00px;height:18.35px;background:#f1f1f1"></div>
<div class="r" style="left:239.00px;top:432.20px;width:81.30px;height:18.35px;background:#fff"></div>
<div class="r" style="left:10.00px;top:435.40px;width:11.00px;height:11.00px;border:1px solid #a6a6a6;background:linear-gradient(135deg,#c2c2c2,#e6e6e6 55%,#f4f4f4);box-sizing:border-box"></div>
<div class="t " style="left:40.00px;top:437.37px;font-size:9.25px;line-height:9.25px;color:#555555;font-weight:normal;transform:scaleY(1.1);transform-origin:0 1.09px;">Apr 17, 2011</div>
<div class="t " style="left:154.00px;top:437.37px;font-size:9.25px;line-height:9.25px;color:#555555;font-weight:normal;transform:scaleY(1.1);transform-origin:0 1.09px;">Payment From</div>
<div class="t " style="left:350.00px;top:437.37px;font-size:9.25px;line-height:9.25px;color:#555555;font-weight:normal;transform:scaleY(1.1);transform-origin:0 1.09px;">Completed</div>
<div class="t " style="left:457.40px;top:437.37px;font-size:9.25px;line-height:9.25px;color:#4a5f98;font-weight:normal;text-decoration:underline;transform:scaleY(1.1);transform-origin:0 1.09px;">Details</div>
<div class="t " style="right:10.60px;top:437.37px;font-size:9.25px;line-height:9.25px;color:#555555;font-weight:normal;transform:scaleY(1.1);transform-origin:0 1.09px;">$23.97 USD</div>
<div class="r" style="left:5.00px;top:450.55px;width:708.00px;height:18.35px;background:#ffffff"></div>
<div class="r" style="left:239.00px;top:450.55px;width:81.30px;height:18.35px;background:#fff"></div>
<div class="r" style="left:10.00px;top:453.75px;width:11.00px;height:11.00px;border:1px solid #a6a6a6;background:linear-gradient(135deg,#c2c2c2,#e6e6e6 55%,#f4f4f4);box-sizing:border-box"></div>
<div class="t " style="left:40.00px;top:455.72px;font-size:9.25px;line-height:9.25px;color:#555555;font-weight:normal;transform:scaleY(1.1);transform-origin:0 1.09px;">Apr 17, 2011</div>
<div class="t " style="left:154.00px;top:455.72px;font-size:9.25px;line-height:9.25px;color:#555555;font-weight:normal;transform:scaleY(1.1);transform-origin:0 1.09px;">Payment From</div>
<div class="t " style="left:350.00px;top:455.72px;font-size:9.25px;line-height:9.25px;color:#555555;font-weight:normal;transform:scaleY(1.1);transform-origin:0 1.09px;">Completed</div>
<div class="t " style="left:457.40px;top:455.72px;font-size:9.25px;line-height:9.25px;color:#4a5f98;font-weight:normal;text-decoration:underline;transform:scaleY(1.1);transform-origin:0 1.09px;">Details</div>
<div class="t " style="right:10.60px;top:455.72px;font-size:9.25px;line-height:9.25px;color:#555555;font-weight:normal;transform:scaleY(1.1);transform-origin:0 1.09px;">$0.00 USD</div>
<div class="r" style="left:5.00px;top:468.90px;width:708.00px;height:18.35px;background:#f1f1f1"></div>
<div class="r" style="left:239.00px;top:468.90px;width:81.30px;height:18.35px;background:#fff"></div>
<div class="r" style="left:10.00px;top:472.10px;width:11.00px;height:11.00px;border:1px solid #a6a6a6;background:linear-gradient(135deg,#c2c2c2,#e6e6e6 55%,#f4f4f4);box-sizing:border-box"></div>
<div class="t " style="left:40.00px;top:474.07px;font-size:9.25px;line-height:9.25px;color:#555555;font-weight:normal;transform:scaleY(1.1);transform-origin:0 1.09px;">Apr 13, 2011</div>
<div class="t " style="left:154.00px;top:474.07px;font-size:9.25px;line-height:9.25px;color:#555555;font-weight:normal;transform:scaleY(1.1);transform-origin:0 1.09px;">Payment From</div>
<div class="t " style="left:350.00px;top:474.07px;font-size:9.25px;line-height:9.25px;color:#555555;font-weight:normal;transform:scaleY(1.1);transform-origin:0 1.09px;">Completed</div>
<div class="t " style="left:457.40px;top:474.07px;font-size:9.25px;line-height:9.25px;color:#4a5f98;font-weight:normal;text-decoration:underline;transform:scaleY(1.1);transform-origin:0 1.09px;">Details</div>
<div class="t " style="right:10.60px;top:474.07px;font-size:9.25px;line-height:9.25px;color:#555555;font-weight:normal;transform:scaleY(1.1);transform-origin:0 1.09px;">$23.97 USD</div>
<div class="r" style="left:5.00px;top:487.25px;width:708.00px;height:18.35px;background:#ffffff"></div>
<div class="r" style="left:239.00px;top:487.25px;width:81.30px;height:18.35px;background:#fff"></div>
<div class="r" style="left:10.00px;top:490.45px;width:11.00px;height:11.00px;border:1px solid #a6a6a6;background:linear-gradient(135deg,#c2c2c2,#e6e6e6 55%,#f4f4f4);box-sizing:border-box"></div>
<div class="t " style="left:40.00px;top:492.42px;font-size:9.25px;line-height:9.25px;color:#555555;font-weight:normal;transform:scaleY(1.1);transform-origin:0 1.09px;">Apr 13, 2011</div>
<div class="t " style="left:154.00px;top:492.42px;font-size:9.25px;line-height:9.25px;color:#555555;font-weight:normal;transform:scaleY(1.1);transform-origin:0 1.09px;">Payment From</div>
<div class="t " style="left:350.00px;top:492.42px;font-size:9.25px;line-height:9.25px;color:#555555;font-weight:normal;transform:scaleY(1.1);transform-origin:0 1.09px;">Completed</div>
<div class="t " style="left:457.40px;top:492.42px;font-size:9.25px;line-height:9.25px;color:#4a5f98;font-weight:normal;text-decoration:underline;transform:scaleY(1.1);transform-origin:0 1.09px;">Details</div>
<div class="t " style="right:10.60px;top:492.42px;font-size:9.25px;line-height:9.25px;color:#555555;font-weight:normal;transform:scaleY(1.1);transform-origin:0 1.09px;">$315.27 USD</div>
<div class="r" style="left:5.00px;top:505.60px;width:708.00px;height:18.35px;background:#f1f1f1"></div>
<div class="r" style="left:239.00px;top:505.60px;width:81.30px;height:18.35px;background:#fff"></div>
<div class="r" style="left:10.00px;top:508.80px;width:11.00px;height:11.00px;border:1px solid #a6a6a6;background:linear-gradient(135deg,#c2c2c2,#e6e6e6 55%,#f4f4f4);box-sizing:border-box"></div>
<div class="t " style="left:40.00px;top:510.77px;font-size:9.25px;line-height:9.25px;color:#555555;font-weight:normal;transform:scaleY(1.1);transform-origin:0 1.09px;">Apr 13, 2011</div>
<div class="r" style="left:118.4px;top:509.00px;width:9.7px;height:13px;background:linear-gradient(#bcbfb0 0,#bcbfb0 2px,#f1f2ea 2px,#f3ecd0 7px,#f5e2ad 12.5px);border-radius:1px;box-shadow:0 0 0 0.5px #e8e4d0"></div>
<div class="t " style="left:154.00px;top:510.77px;font-size:9.25px;line-height:9.25px;color:#555555;font-weight:normal;transform:scaleY(1.1);transform-origin:0 1.09px;">Payment From</div>
<div class="t " style="left:350.00px;top:510.77px;font-size:9.25px;line-height:9.25px;color:#555555;font-weight:normal;transform:scaleY(1.1);transform-origin:0 1.09px;">Completed</div>
<div class="t " style="left:457.40px;top:510.77px;font-size:9.25px;line-height:9.25px;color:#4a5f98;font-weight:normal;text-decoration:underline;transform:scaleY(1.1);transform-origin:0 1.09px;">Details</div>
<div class="t " style="right:10.60px;top:510.77px;font-size:9.25px;line-height:9.25px;color:#555555;font-weight:normal;transform:scaleY(1.1);transform-origin:0 1.09px;">$23.97 USD</div>
<div class="r" style="left:5.00px;top:524.00px;width:708.00px;height:1.00px;background:#d8dbdf"></div>
<div class="r" style="left:5.00px;top:525.00px;width:708.00px;height:29.00px;background:#f5f8fb"></div>
<div class="r" style="left:10px;top:533.2px;width:99px;height:12.5px;border:1px solid #aeb0b3;background:linear-gradient(#f7f7f7,#e6e6e6 60%,#dadada);border-radius:1px"></div><div class="t " style="left:18.10px;top:536.17px;font-size:8.3px;line-height:8.3px;color:#555555;font-weight:normal;">Move to Recent Activity</div><div class="t " style="left:118.90px;top:534.77px;font-size:8.3px;line-height:8.3px;color:#56628a;font-weight:normal;letter-spacing:-0.1px;">What's this</div><div class="r" style="left:119.50px;top:543.80px;width:39.00px;height:1.00px;background:repeating-linear-gradient(90deg,#4a5578 0 2px,transparent 2px 4px)"></div>
<div class="r" style="left:5.00px;top:554.00px;width:708.00px;height:1.00px;background:#dde1e5"></div>
<div class="r" style="left:5.00px;top:555.00px;width:708.00px;height:21.00px;background:#eaecef"></div>
<div class="t " style="left:10.80px;top:561.97px;font-size:8.3px;line-height:8.3px;color:#555555;font-weight:normal;letter-spacing:-0.08px;">Displaying 20 results per page</div>
<div class="t " style="right:23.30px;top:562.77px;font-size:8.3px;line-height:8.3px;color:#4a5a8a;font-weight:normal;text-decoration:underline;">Next</div><div class="r" style="left:699.3px;top:562.3px;width:7px;height:6.5px;border:1px solid #56607a;background:#f4f7fb;box-shadow:inset 0 0 0 0.5px #9aa2b6"></div><svg class="r" style="left:699.3px;top:562.3px" width="9" height="9" viewBox="0 0 9 9"><path d="M3.2 2.2 L6.3 4.3 L3.2 6.4 Z" fill="#2f3a58"/></svg>
</body></html>
